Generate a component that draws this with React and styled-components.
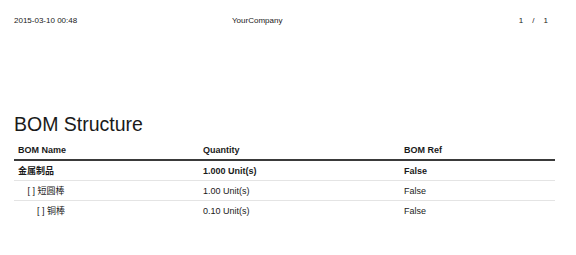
import React from "react";
import styled, { createGlobalStyle } from "styled-components";

const GlobalStyle = createGlobalStyle`
  html, body {
    margin: 0;
    padding: 0;
    background: #fff;
  }
  body {
    font-family: "Liberation Sans", Arial, "Noto Sans CJK SC", sans-serif;
    color: #1a1a1a;
  }
`;

const Page = styled.div`
  width: 576px;
  height: 255px;
  box-sizing: border-box;
  padding: 15px 21px 0 14px;
`;

const Header = styled.div`
  display: grid;
  grid-template-columns: 218px 1fr auto;
  align-items: center;
  font-size: 8px;
  height: 10px;
  padding-right: 7px;
`;

const Pager = styled.div`
  display: flex;
  gap: 9px;
`;

const Title = styled.h1`
  margin: 88px 0 0;
  font-size: 19.5px;
  font-weight: normal;
  line-height: 22px;
`;

const Table = styled.div`
  margin-top: 5px;
  font-size: 9px;
`;

const Row = styled.div`
  display: grid;
  grid-template-columns: 185px 201px 1fr;
  height: 19px;
  align-items: center;
  font-weight: ${(p) => (p.$bold ? "bold" : "normal")};
  border-bottom: ${(p) =>
    p.$head ? "2px solid #3a3a3a" : p.$last ? "none" : "1px solid #e4e4e4"};
`;

const Cell = styled.div`
  padding-left: ${(p) => 4 + (p.$indent || 0) * 9.5}px;
  white-space: nowrap;
`;

const rows = [
  { name: "金属制品", qty: "1.000 Unit(s)", ref: "False", level: 0, bold: true },
  { name: "[ ] 短圆棒", qty: "1.00 Unit(s)", ref: "False", level: 1 },
  { name: "[ ] 铜棒", qty: "0.10 Unit(s)", ref: "False", level: 2 },
];

const App = () => {
  return (
    <>
      <GlobalStyle />
      <Page>
        <Header>
          <div>2015-03-10 00:48</div>
          <div>YourCompany</div>
          <Pager>
            <span>1</span>
            <span>/</span>
            <span>1</span>
          </Pager>
        </Header>
        <Title>BOM Structure</Title>
        <Table>
          <Row $head $bold>
            <Cell>BOM Name</Cell>
            <Cell>Quantity</Cell>
            <Cell>BOM Ref</Cell>
          </Row>
          {rows.map((r, i) => (
            <Row key={i} $bold={r.bold} $last={i === rows.length - 1}>
              <Cell $indent={r.level}>{r.name}</Cell>
              <Cell>{r.qty}</Cell>
              <Cell>{r.ref}</Cell>
            </Row>
          ))}
        </Table>
      </Page>
    </>
  );
};

export default App;
